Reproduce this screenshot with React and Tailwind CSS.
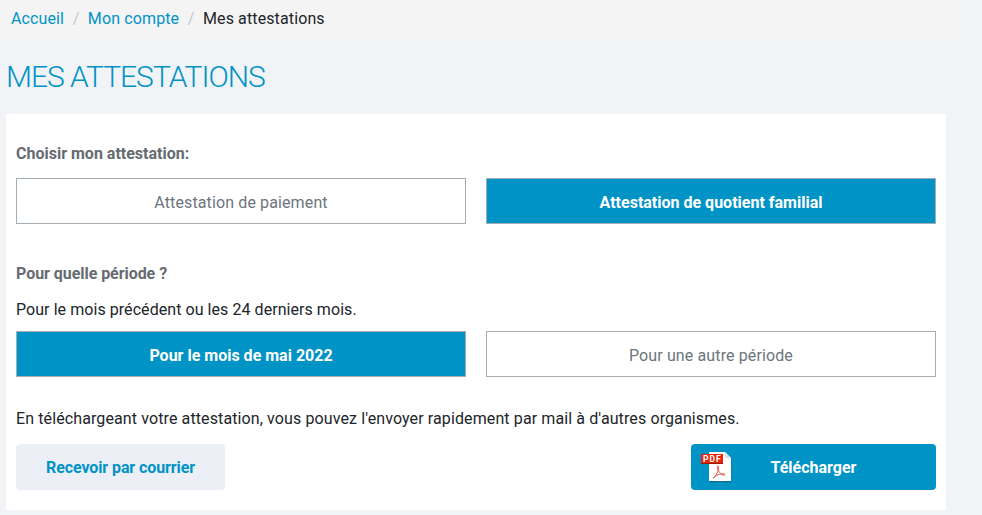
import React from 'react';

const PdfIcon = () => (
  <svg width="32" height="32" viewBox="0 0 32 32" className="block">
    <path d="M8 1h16l6 6v23H8z" fill="#0a4f6b" fillOpacity="0.45" transform="translate(0.5 0.5)" />
    <path d="M8 0h16l6 6v23H8z" fill="#fff" />
    <path d="M24 0l6 6h-6z" fill="#dfe3e6" />
    <rect x="0" y="3" width="22" height="9" fill="#9c1804" />
    <rect x="0" y="2" width="22" height="9" fill="#e8250a" />
    <text x="11.300" y="9.700" textAnchor="middle" fontSize="8.500" fontWeight="700" fontFamily="Roboto, sans-serif" fill="#fff" letterSpacing="1">PDF</text>
    <path
      d="M12.500 26c2.300-1.500 4.300-5.500 4.900-9.500c.3-1.800-.1-2.800-.7-2.700c-.7.100-.5 2.200.8 4.800c1.300 2.500 3 4.200 4.700 4.500c1.300.2 2.200-.2 1.900-.8c-.3-.6-2.300-.7-4.800-.2c-2.800.5-5.300 1.900-6.500 3c-.6.600-.8.900-.3.900z"
      fill="none"
      stroke="#e2463a"
      strokeWidth="0.900"
    />
  </svg>
);

const ChoiceButton = ({ active, children }) => (
  <button
    className={
      active
        ? 'h-[46px] flex-1 border border-[#a3adb3] bg-[#0093c6] pt-[3px] text-base font-bold text-white'
        : 'h-[46px] flex-1 border border-[#a3adb3] bg-white pt-[3px] text-base tracking-[0.12px] text-[#6c757d]'
    }
  >
    {children}
  </button>
);

const App = () => {
  return (
    <div className="h-[515px] w-[982px] overflow-hidden bg-[#f2f3f6] font-['Roboto',sans-serif]">
      {/* Breadcrumb */}
      <nav className="flex h-[38px] w-[957px] items-center bg-[#f4f4f5] pl-[11px] text-base tracking-[0.12px]">
        <a className="text-[#0093c6]">Accueil</a>
        <span className="px-[8.5px] text-[#c4c9cd]">/</span>
        <a className="text-[#0093c6]">Mon compte</a>
        <span className="px-[8.5px] text-[#c4c9cd]">/</span>
        <span className="text-[#212529]">Mes attestations</span>
      </nav>

      <h1 className="ml-[6px] mt-[19px] text-[30px] leading-[40px] font-light tracking-[-1px] text-[#0093c6]">MES ATTESTATIONS</h1>

      {/* Card */}
      <div className="ml-[6px] mt-[17px] h-[396px] w-[940px] bg-white px-[10px] pt-[30px]">
        <p className="text-base leading-[19px] font-bold text-[#666b72]">Choisir mon attestation:</p>
        <div className="mt-[15px] flex gap-5">
          <ChoiceButton>Attestation de paiement</ChoiceButton>
          <ChoiceButton active>Attestation de quotient familial</ChoiceButton>
        </div>

        <p className="mt-[40px] text-base leading-[19px] font-bold tracking-[-0.05px] text-[#666b72]">Pour quelle période ?</p>
        <p className="mt-[17px] text-base leading-[19px] tracking-[0.06px] text-[#212529]">Pour le mois précédent ou les 24 derniers mois.</p>
        <div className="mt-[12px] flex gap-5">
          <ChoiceButton active>Pour le mois de mai 2022</ChoiceButton>
          <ChoiceButton>Pour une autre période</ChoiceButton>
        </div>

        <p className="mt-[32px] text-base leading-[19px] tracking-[0.11px] text-[#212529]">
          En téléchargeant votre attestation, vous pouvez l'envoyer rapidement par mail à d'autres organismes.
        </p>
        <div className="mt-[16px] flex justify-between">
          <button className="h-[46px] w-[209px] rounded-[4px] bg-[#eceff6] pt-[1px] text-base font-bold tracking-[-0.1px] text-[#0093c6]">
            Recevoir par courrier
          </button>
          <button className="relative h-[46px] w-[245px] rounded-[4px] bg-[#0093c6] pt-[1px] text-base font-bold text-white">
            <span className="absolute left-[10px] top-[8px]">
              <PdfIcon />
            </span>
            Télécharger
          </button>
        </div>
      </div>
    </div>
  );
};

export default App;
